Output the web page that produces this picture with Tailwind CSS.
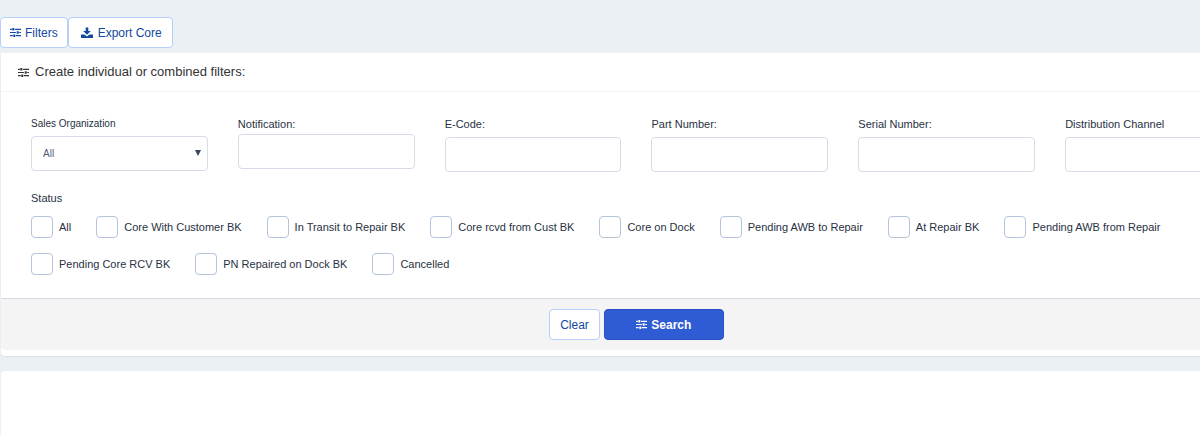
<!DOCTYPE html>
<html lang="en">
<head>
<meta charset="utf-8">
<title>Core filters</title>
<script src="https://cdn.jsdelivr.net/npm/@tailwindcss/browser@4"></script>
</head>
<body class="min-h-screen overflow-x-hidden bg-[#ebf0f5] font-['Liberation_Sans',Arial,sans-serif] text-[#283143]">
<svg class="hidden" aria-hidden="true">
  <symbol id="sliders" viewBox="0 0 12 12">
    <path d="M0 2.500h2M5.500 2.500H12M0 6h6.500M10 6h2M0 9.500h3M6.500 9.500H12" stroke="currentColor" stroke-width="1.300" fill="none"/>
    <path d="M2.500 1.200h2.200v2.600h-2.200zM7.300 4.700h2.200v2.600h-2.200zM3.600 8.200h2.200v2.600h-2.200z" fill="currentColor"/>
  </symbol>
</svg>
<main class="flex min-h-screen w-[106%] flex-col pt-[17px]">
  <div class="flex pb-[5px]">
    <button type="button" class="flex h-[31px] items-center gap-1 rounded border border-[#b5cffa] bg-white px-[9px] text-xs text-[#1248a0]"><svg class="h-[11px] w-[11px]"><use href="#sliders"/></svg>Filters</button>
    <button type="button" class="flex h-[31px] items-center gap-[5px] rounded border border-[#b5cffa] bg-white pr-[10px] pl-3 text-xs text-[#1248a0]"><svg class="h-3 w-3" viewBox="0 0 12 12" fill="currentColor"><path d="M4.700 0.500h2.600v3.500h2.500L6 7.800 2.200 4h2.500z"/><path d="M0 7.500h3.500L6 9.500l2.500-2H12v3.500H0z"/></svg>Export Core</button>
  </div>

  <section class="ml-px rounded-b bg-white pb-[6px] shadow-[0_1px_1px_#d9e0e6]">
    <h1 class="flex h-[39px] items-center gap-[6px] border-b border-[#f2f4f6] px-[17px] text-[13px] text-[#333]"><svg class="h-[11px] w-[11px]"><use href="#sliders"/></svg>Create individual or combined filters:</h1>
    <form>
      <div class="px-[30px] pt-[25px] pb-[23px]">
        <div class="grid grid-cols-6 gap-x-[30px] text-[11px] leading-[14px]">
          <div class="flex flex-col gap-[5px]"><label for="org" class="text-[10px]">Sales Organization</label>
            <div class="relative">
              <select id="org" class="h-[35px] w-full appearance-none rounded border border-[#d5dce8] bg-white px-[11px] text-[10px] text-[#4d5b75]"><option>All</option></select>
              <svg class="pointer-events-none absolute top-[14px] right-[7px] h-[6px] w-[6px]" viewBox="0 0 6 6" fill="#344563"><path d="M0 0h6L3 6z"/></svg>
            </div>
          </div>
          <div class="flex flex-col gap-[3px]"><label for="note">Notification:</label><input id="note" type="text" class="h-[35px] w-full rounded border border-[#d5dce8] px-3"></div>
          <div class="flex flex-col gap-[6px]"><label for="ecode">E-Code:</label><input id="ecode" type="text" class="h-[35px] w-full rounded border border-[#d5dce8] px-3"></div>
          <div class="flex flex-col gap-[6px]"><label for="part">Part Number:</label><input id="part" type="text" class="h-[35px] w-full rounded border border-[#d5dce8] px-3"></div>
          <div class="flex flex-col gap-[6px]"><label for="serial">Serial Number:</label><input id="serial" type="text" class="h-[35px] w-full rounded border border-[#d5dce8] px-3"></div>
          <div class="flex flex-col gap-[6px]"><label for="channel">Distribution Channel</label><input id="channel" type="text" class="h-[35px] w-full rounded border border-[#d5dce8] px-3"></div>
        </div>
        <fieldset class="mt-[19px] text-[11px] leading-[14px]">
          <legend>Status</legend>
          <div class="mt-[11px] flex flex-wrap gap-x-[25px] gap-y-[15px]">
            <label class="flex items-center gap-[6px]"><input type="checkbox" class="h-[22px] w-[22px] appearance-none rounded border border-[#b4c4da] checked:bg-[#2f5bd4]">All</label>
            <label class="flex items-center gap-[6px]"><input type="checkbox" class="h-[22px] w-[22px] appearance-none rounded border border-[#b4c4da] checked:bg-[#2f5bd4]">Core With Customer BK</label>
            <label class="flex items-center gap-[6px]"><input type="checkbox" class="h-[22px] w-[22px] appearance-none rounded border border-[#b4c4da] checked:bg-[#2f5bd4]">In Transit to Repair BK</label>
            <label class="flex items-center gap-[6px]"><input type="checkbox" class="h-[22px] w-[22px] appearance-none rounded border border-[#b4c4da] checked:bg-[#2f5bd4]">Core rcvd from Cust BK</label>
            <label class="flex items-center gap-[6px]"><input type="checkbox" class="h-[22px] w-[22px] appearance-none rounded border border-[#b4c4da] checked:bg-[#2f5bd4]">Core on Dock</label>
            <label class="flex items-center gap-[6px]"><input type="checkbox" class="h-[22px] w-[22px] appearance-none rounded border border-[#b4c4da] checked:bg-[#2f5bd4]">Pending AWB to Repair</label>
            <label class="flex items-center gap-[6px]"><input type="checkbox" class="h-[22px] w-[22px] appearance-none rounded border border-[#b4c4da] checked:bg-[#2f5bd4]">At Repair BK</label>
            <label class="flex items-center gap-[6px]"><input type="checkbox" class="h-[22px] w-[22px] appearance-none rounded border border-[#b4c4da] checked:bg-[#2f5bd4]">Pending AWB from Repair</label>
            <label class="flex items-center gap-[6px]"><input type="checkbox" class="h-[22px] w-[22px] appearance-none rounded border border-[#b4c4da] checked:bg-[#2f5bd4]">Pending Core RCV BK</label>
            <label class="flex items-center gap-[6px]"><input type="checkbox" class="h-[22px] w-[22px] appearance-none rounded border border-[#b4c4da] checked:bg-[#2f5bd4]">PN Repaired on Dock BK</label>
            <label class="flex items-center gap-[6px]"><input type="checkbox" class="h-[22px] w-[22px] appearance-none rounded border border-[#b4c4da] checked:bg-[#2f5bd4]">Cancelled</label>
          </div>
        </fieldset>
      </div>
      <div class="flex justify-center gap-1 rounded-b border-t border-[#d3dae5] bg-[#f4f4f4] py-[10px] text-xs">
        <button type="reset" class="h-[31px] rounded border border-[#b5cffa] bg-white px-[10px] text-[#1248a0]">Clear</button>
        <button type="submit" class="flex h-[31px] w-[120px] items-center justify-center gap-1 rounded border border-[#2850c4] bg-[#2f5bd4] font-bold text-white"><svg class="h-[11px] w-[11px]"><use href="#sliders"/></svg>Search</button>
      </div>
    </form>
  </section>
  <section class="mt-[15px] ml-px grow rounded-t bg-white"></section>
</main>
</body>
</html>
